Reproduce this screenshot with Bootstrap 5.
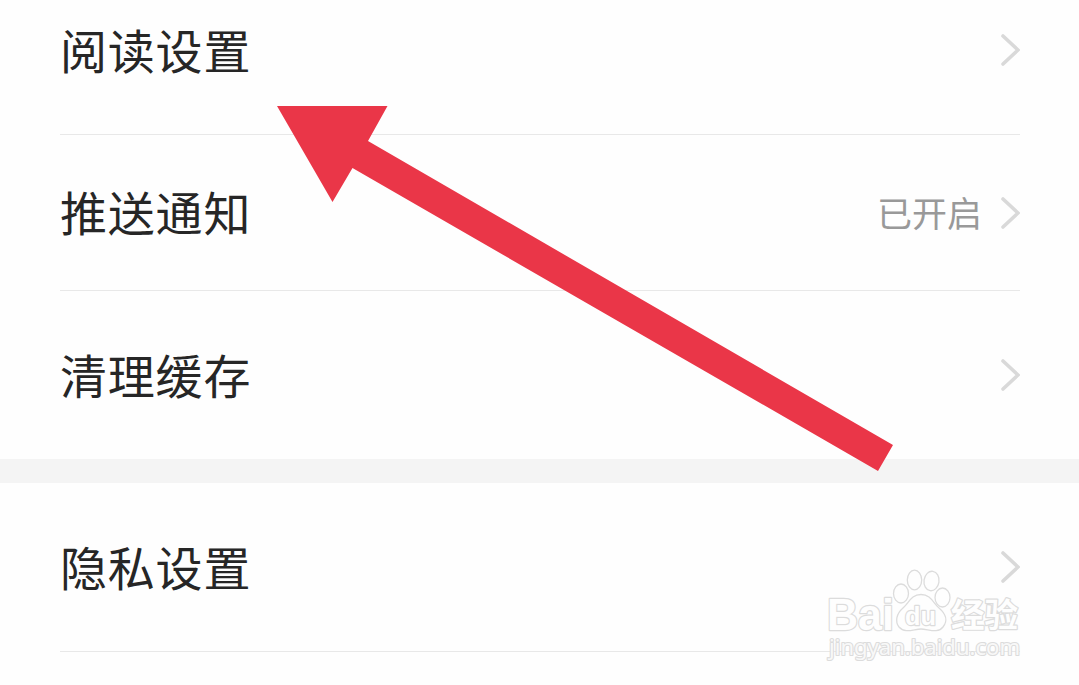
<!DOCTYPE html>
<html lang="zh-CN">
<head>
    <meta charset="UTF-8">
    <meta name="viewport" content="width=device-width, initial-scale=1.0">
    <title>设置</title>
    <link rel="stylesheet" href="https://cdn.jsdelivr.net/npm/bootstrap@5.3.0/dist/css/bootstrap.min.css">
    <style>
        body {
            background-color: #fefefe;
            color: #262626;
            font-family: "Noto Sans CJK SC", sans-serif;
            height: 685px;
            overflow: hidden;
        }
        .settings-group {
            padding: 0 59px 0 60px;
        }
        .setting-row {
            height: 168px;
            font-size: 47px;
            letter-spacing: 0.8px;
            line-height: 70px;
        }
        .setting-name {
            padding-bottom: 3px;
        }
        .row-top {
            height: 135px;
            padding-bottom: 34px;
        }
        .row-middle {
            height: 156px;
        }
        .row-last {
            height: 169px;
        }
        .row-line {
            border-bottom: 1px solid #e8e8e8;
        }
        .setting-state {
            font-size: 35px;
            letter-spacing: 0;
            color: #999;
            margin-right: 18px;
            padding-bottom: 1px;
        }
        .chevron {
            width: 20px;
            height: 32px;
            fill: none;
            stroke: #d9d9d9;
            stroke-width: 3.6;
            stroke-linecap: round;
        }
        .group-gap {
            height: 24px;
            background-color: #f4f4f4;
        }
        .overlay {
            left: 0;
            top: 0;
        }
        .wm {
            fill: #fefefe;
            stroke: #dcdcdc;
            stroke-width: 1.3;
            stroke-linejoin: round;
        }
        .wm-text {
            paint-order: stroke;
            stroke-width: 2.4;
        }
    </style>
</head>
<body class="position-relative">
    <div class="settings-group">
        <div class="setting-row row-top row-line d-flex align-items-center justify-content-between">
            <span class="setting-name">阅读设置</span>
            <svg class="chevron" viewBox="0 0 20 32"><path d="M3 2L18 16L3 30"/></svg>
        </div>
        <div class="setting-row row-middle row-line d-flex align-items-center">
            <span class="setting-name me-auto">推送通知</span>
            <span class="setting-state">已开启</span>
            <svg class="chevron" viewBox="0 0 20 32"><path d="M3 2L18 16L3 30"/></svg>
        </div>
        <div class="setting-row d-flex align-items-center justify-content-between">
            <span class="setting-name">清理缓存</span>
            <svg class="chevron" viewBox="0 0 20 32"><path d="M3 2L18 16L3 30"/></svg>
        </div>
    </div>
    <div class="group-gap"></div>
    <div class="settings-group">
        <div class="setting-row row-last row-line d-flex align-items-center justify-content-between">
            <span class="setting-name">隐私设置</span>
            <svg class="chevron" viewBox="0 0 20 32"><path d="M3 2L18 16L3 30"/></svg>
        </div>
    </div>

    <svg class="overlay position-absolute" width="1079" height="685" viewBox="0 0 1079 685">
        <!-- arrow -->
        <path fill="#ea3648" d="M277 106H387.500L368 141L893 445L878 471L352.500 168L332.500 202Z"/>

        <!-- watermark -->
        <g class="wm">
            <ellipse cx="901" cy="593.500" rx="7.500" ry="9.500"/>
            <ellipse cx="914.500" cy="580" rx="7.200" ry="9.800"/>
            <ellipse cx="931.500" cy="581" rx="7.500" ry="9.800" transform="rotate(8 931.500 581)"/>
            <ellipse cx="942.500" cy="597.500" rx="7.500" ry="9.500"/>
            <path d="M921 594.500C911 594.500 909 603 903 608C896 614 895 622 899 627C905 634 914 629 921 629C928 629 938 634 943 627C948 621 946 614 939 608C933 603 931 594.500 921 594.500Z"/>
            <g class="wm-text" font-family="Liberation Sans, sans-serif" font-weight="700">
                <text x="827" y="629.500" font-size="44" textLength="67" lengthAdjust="spacingAndGlyphs">Bai</text>
                <text x="905" y="625" font-size="26" textLength="31" lengthAdjust="spacingAndGlyphs">du</text>
                <text x="951" y="627" font-size="33" font-family="Noto Sans CJK SC, sans-serif" textLength="67" lengthAdjust="spacingAndGlyphs">经验</text>
                <text x="829" y="655" font-size="22" font-family="Noto Sans, sans-serif" font-weight="400" fill-opacity="0.85" stroke-width="2.2" textLength="191" lengthAdjust="spacingAndGlyphs">jingyan.baidu.com</text>
            </g>
        </g>
    </svg>
    <script src="https://cdn.jsdelivr.net/npm/bootstrap@5.3.0/dist/js/bootstrap.bundle.min.js"></script>
</body>
</html>
